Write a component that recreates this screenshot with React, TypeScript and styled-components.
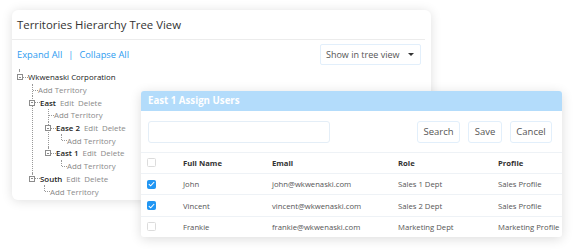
import styled, { createGlobalStyle } from 'styled-components';

//#region styled component
const GlobalStyle = createGlobalStyle`
  html, body {
    margin: 0;
    padding: 0;
    background: #fff;
  }
  body {
    font-family: 'Open Sans', 'Noto Sans', sans-serif;
    color: #333;
  }
`;

const Stage = styled.div`
  position: relative;
  width: 574px;
  height: 250px;
  overflow: hidden;
  padding: 10px 0 0 12px;
  box-sizing: border-box;
`;

const Panel = styled.section`
  width: 419px;
  height: 190px;
  background: #fff;
  border-radius: 6px;
  box-shadow: 0 1px 11px rgba(0, 0, 0, 0.13);
  display: flex;
  flex-direction: column;
`;

const PanelHead = styled.header`
  height: 29px;
  margin-right: 6px;
  padding-left: 5px;
  display: flex;
  align-items: center;
  border-bottom: 1px solid #ececec;
  font-size: 11.4px;
  color: #333;
`;

const Toolbar = styled.div`
  height: 29px;
  padding: 0 10px 0 5px;
  display: flex;
  align-items: center;
  justify-content: space-between;
`;

const Links = styled.div`
  display: flex;
  align-items: center;
  gap: 6px;
  font-size: 9.3px;
  color: #2d9bf0;
`;

const Select = styled.div`
  width: 101px;
  height: 21px;
  box-sizing: border-box;
  border: 1px solid #e2effb;
  border-radius: 2px;
  padding: 0 6px 0 5px;
  display: flex;
  align-items: center;
  justify-content: space-between;
  font-size: 9px;
  color: #555;
`;

const Caret = styled.span`
  width: 0;
  height: 0;
  border-left: 3px solid transparent;
  border-right: 3px solid transparent;
  border-top: 3px solid #333;
`;

const Tree = styled.div`
  padding: 0 0 0 5px;
  font-size: 7.9px;
`;

const RootStem = styled.div`
  margin-left: 2px;
  height: 2px;
  border-left: 1px dotted #999;
`;

const Row = styled.div`
  display: flex;
  align-items: center;
  height: 12.7px;
  white-space: nowrap;
`;

const Toggle = styled.span<{ nested?: boolean }>`
  width: 4px;
  height: 4px;
  border: 1px solid #8c8c8c;
  margin-left: ${({ nested }) => (nested ? -4 : 0)}px;
  position: relative;
  flex: none;
  background: #fff;
  &::after {
    content: '';
    position: absolute;
    left: 1px;
    right: 1px;
    top: 1.5px;
    height: 1px;
    background: #8c8c8c;
  }
`;

const Dash = styled.span<{ w: number }>`
  width: ${({ w }) => w}px;
  border-top: 1px dotted #999;
  flex: none;
`;

const Label = styled.span<{ tone: 'root' | 'node' | 'add' }>`
  color: ${({ tone }) => (tone === 'add' ? '#8a8a8a' : '#222')};
  font-weight: ${({ tone }) => (tone === 'node' ? 600 : 400)};
`;

const Action = styled.span`
  color: #8a8a8a;
  margin-left: 4px;
`;

const Children = styled.div<{ offset: number }>`
  margin-left: ${({ offset }) => offset}px;
`;

const Branch = styled.div`
  position: relative;
  border-left: 1px dotted #999;
  &:last-child {
    border-left-color: transparent;
  }
  &:last-child::before {
    content: '';
    position: absolute;
    left: -1px;
    top: 0;
    height: 6px;
    border-left: 1px dotted #999;
  }
`;

const Dialog = styled.section`
  position: absolute;
  left: 141px;
  top: 91px;
  width: 421px;
  height: 146px;
  background: #fff;
  border-radius: 3px;
  box-shadow: 0 2px 12px rgba(0, 0, 0, 0.14);
  overflow: hidden;
  display: flex;
  flex-direction: column;
`;

const DialogHead = styled.header`
  height: 20px;
  background: #b3dcfb;
  color: #fff;
  font-weight: 700;
  font-size: 9.7px;
  padding-left: 7px;
  display: flex;
  align-items: center;
`;

const SearchBar = styled.div`
  height: 42px;
  padding: 10px 10px 0 7px;
  box-sizing: border-box;
  display: flex;
  gap: 8px;
  align-items: flex-start;
  border-bottom: 1px solid #eef2f6;
`;

const Input = styled.div`
  width: 182px;
  height: 22px;
  border: 1px solid #e4eef7;
  border-radius: 3px;
  box-sizing: border-box;
  margin-right: auto;
`;

const Button = styled.div<{ w: number }>`
  width: ${({ w }) => w}px;
  height: 22px;
  box-sizing: border-box;
  border: 1px solid #e2effb;
  border-radius: 3px;
  display: flex;
  align-items: center;
  justify-content: center;
  font-size: 9.5px;
  color: #555;
`;

const TableRow = styled.div<{ head?: boolean }>`
  display: grid;
  grid-template-columns: 36px 89px 126px 100px 1fr;
  align-items: center;
  height: 20.4px;
  padding-left: 6px;
  border-bottom: 1px solid #eef2f6;
  font-size: 7.7px;
  font-weight: ${({ head }) => (head ? 700 : 400)};
  color: ${({ head }) => (head ? '#333' : '#555')};
  white-space: nowrap;
  &:last-child {
    border-bottom: none;
  }
`;

const Check = styled.span<{ on?: boolean }>`
  width: 9px;
  height: 9px;
  box-sizing: border-box;
  border-radius: 1.5px;
  border: 1px solid ${({ on }) => (on ? '#2196f3' : '#dcdcdc')};
  background: ${({ on }) => (on ? '#2196f3' : '#fff')};
  display: flex;
  align-items: center;
  justify-content: center;
`;
//#endregion

interface TreeItem {
  name: string;
  offset: number;
  children: TreeItem[];
}

const tree: TreeItem = {
  name: 'Wkwenaski Corporation',
  offset: 15,
  children: [
    {
      name: 'East',
      offset: 15,
      children: [
        { name: 'Ease 2', offset: 12, children: [] },
        { name: 'East 1', offset: 12, children: [] },
      ],
    },
    { name: 'South', offset: 11, children: [] },
  ],
};

function TreeNode({ item, top }: { item: TreeItem; top?: boolean }) {
  return (
    <>
      <Row>
        <Toggle nested={!top} />
        <Dash w={5} />
        <Label tone={top ? 'root' : 'node'}>{item.name}</Label>
        {!top && (
          <>
            <Action>Edit</Action>
            <Action>Delete</Action>
          </>
        )}
      </Row>
      <Children offset={item.offset}>
        <Branch>
          <Row>
            <Dash w={5} />
            <Label tone="add">Add Territory</Label>
          </Row>
        </Branch>
        {item.children.map((c) => (
          <Branch key={c.name}>
            <TreeNode item={c} />
          </Branch>
        ))}
      </Children>
    </>
  );
}

const users = [
  { name: 'John', email: 'john@wkwenaski.com', role: 'Sales 1 Dept', profile: 'Sales Profile', on: true },
  { name: 'Vincent', email: 'vincent@wkwenaski.com', role: 'Sales 2 Dept', profile: 'Sales Profile', on: true },
  { name: 'Frankie', email: 'frankie@wkwenaski.com', role: 'Marketing Dept', profile: 'Marketing Profile', on: false },
];

function CheckBox({ on }: { on?: boolean }) {
  return (
    <Check on={on}>
      {on && (
        <svg width="7" height="6" viewBox="0 0 7 6">
          <path d="M0.8 3.1 L2.7 4.8 L6.2 1" fill="none" stroke="#fff" strokeWidth="1.1" />
        </svg>
      )}
    </Check>
  );
}

export default function App() {
  return (
    <Stage>
      <GlobalStyle />
      <Panel>
        <PanelHead>Territories Hierarchy Tree View</PanelHead>
        <Toolbar>
          <Links>
            <span>Expand All</span>
            <span>|</span>
            <span>Collapse All</span>
          </Links>
          <Select>
            Show in tree view
            <Caret />
          </Select>
        </Toolbar>
        <Tree>
          <RootStem />
          <TreeNode item={tree} top />
        </Tree>
      </Panel>

      <Dialog>
        <DialogHead>East 1 Assign Users</DialogHead>
        <SearchBar>
          <Input />
          <Button w={43}>Search</Button>
          <Button w={34}>Save</Button>
          <Button w={42}>Cancel</Button>
        </SearchBar>
        <TableRow head>
          <CheckBox />
          <span>Full Name</span>
          <span>Email</span>
          <span>Role</span>
          <span>Profile</span>
        </TableRow>
        {users.map((u) => (
          <TableRow key={u.name}>
            <CheckBox on={u.on} />
            <span>{u.name}</span>
            <span>{u.email}</span>
            <span>{u.role}</span>
            <span>{u.profile}</span>
          </TableRow>
        ))}
      </Dialog>
    </Stage>
  );
}
